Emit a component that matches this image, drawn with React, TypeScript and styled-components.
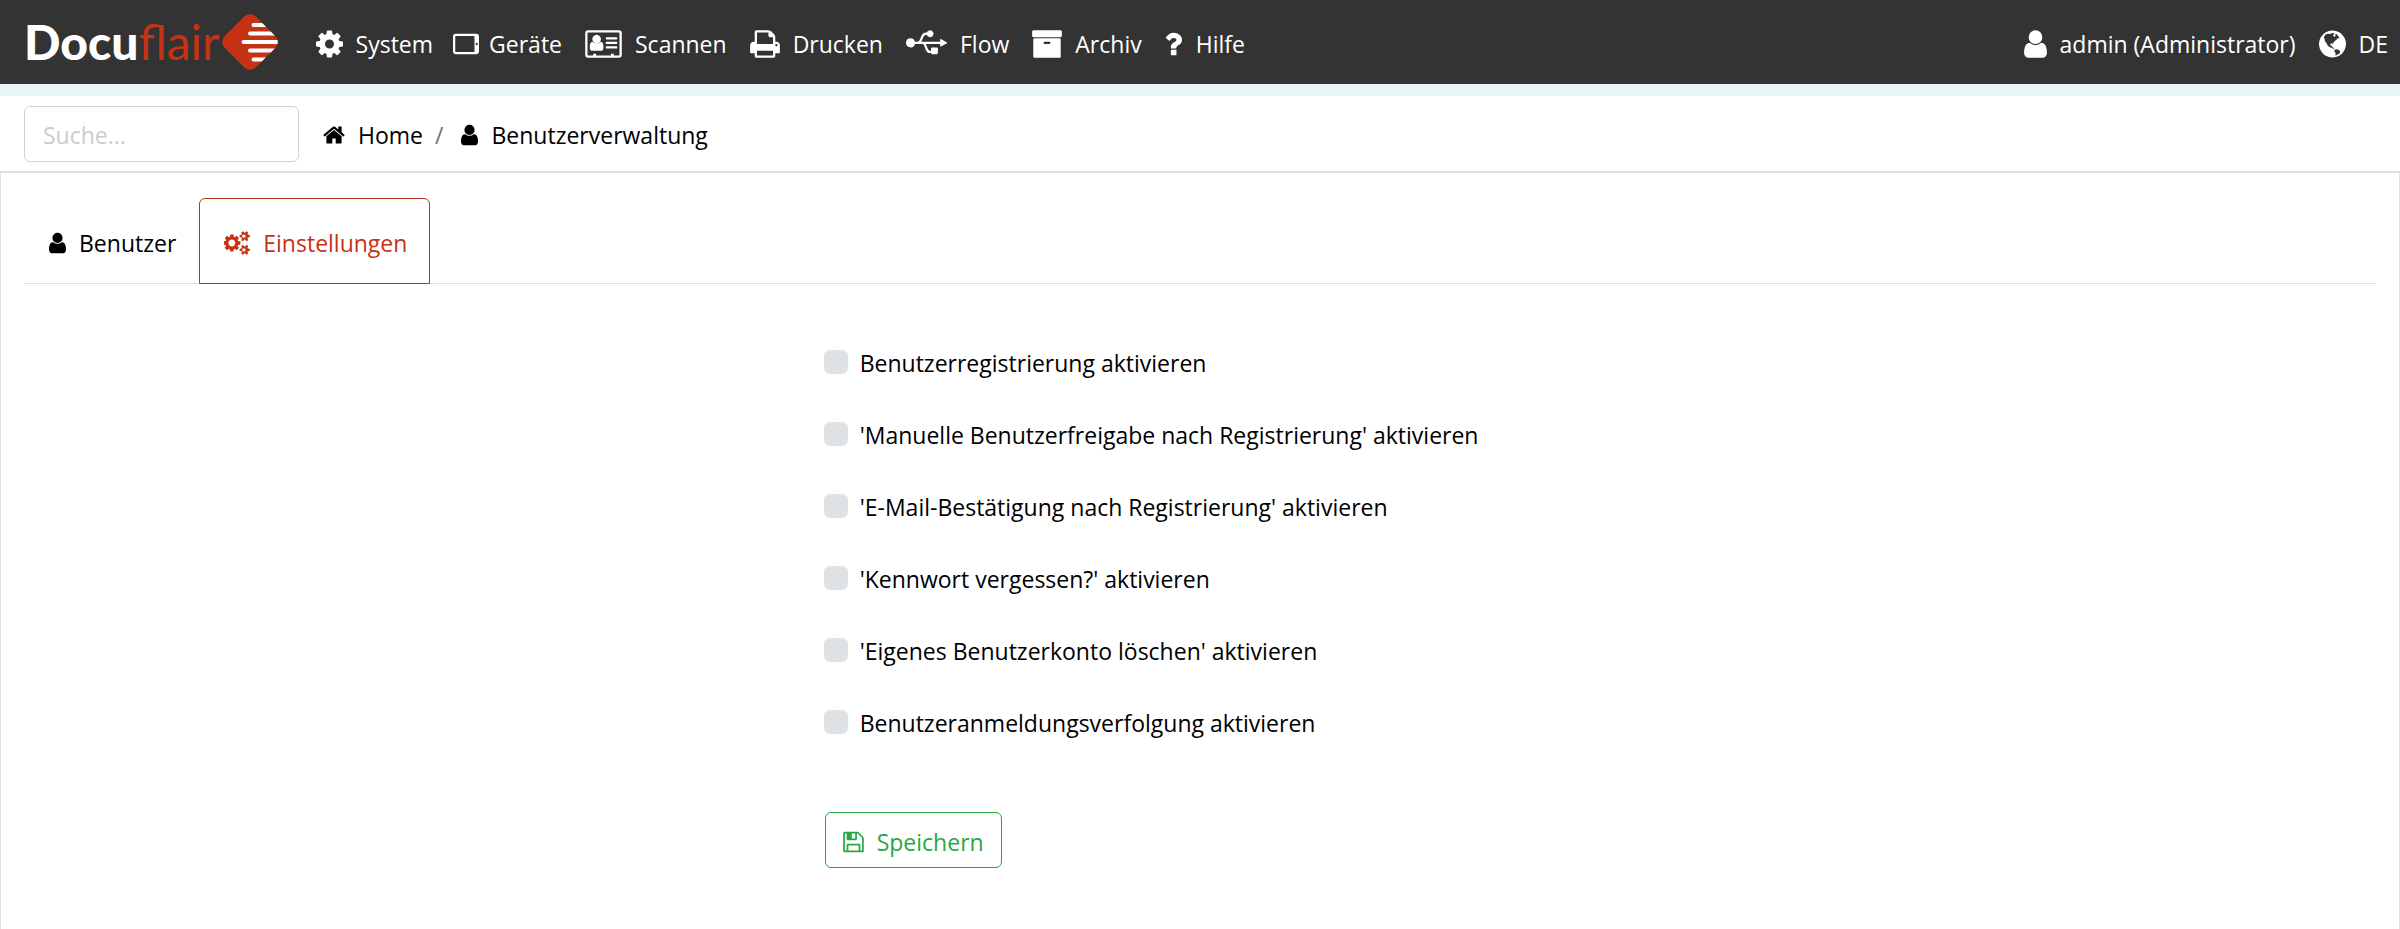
import React from 'react';
import styled, { createGlobalStyle } from 'styled-components';

const GlobalStyle = createGlobalStyle`
  *, *::before, *::after { box-sizing: border-box; }
  html, body, #root { height: 100%; }
  body {
    margin: 0;
    background: #fff;
    color: #000;
    font-family: 'Open Sans', 'Noto Sans', sans-serif;
    font-size: 23px;
    line-height: 36px;
  }
  a { color: inherit; text-decoration: none; }
  ul, ol { margin: 0; padding: 0; list-style: none; }
`;

const Page = styled.div`
  min-height: 100%;
  display: flex;
  flex-direction: column;
`;

const TopBar = styled.header`
  height: 84px;
  padding: 0 12px 0 24px;
  display: flex;
  align-items: center;
  background: #333;
  color: #fff;
`;

const AccentStrip = styled.div`
  height: 12px;
  background: #eaf4f7;
`;

const Brand = styled.a`
  display: flex;
  align-items: center;
  gap: 2px;
  margin-right: 38px;
  font-family: Lato, sans-serif;
  font-size: 48px;
  line-height: 56px;
`;

const BrandStrong = styled.span`
  font-weight: 900;
`;

const BrandLight = styled.span`
  font-weight: 400;
  color: #c53214;
`;

const NavList = styled.ul`
  display: flex;
  gap: 23px;
`;

const UserNav = styled(NavList)`
  margin-left: auto;
`;

const NavLink = styled.a`
  display: flex;
  align-items: center;
  gap: 13px;
  white-space: nowrap;
  padding-top: 4px;
`;

const SubBar = styled.div`
  display: flex;
  align-items: center;
  gap: 24px;
  padding: 10px 24px 9px;
`;

const SearchInput = styled.input`
  width: 275px;
  height: 56px;
  padding: 2px 18px 0;
  border: 1px solid #ced4da;
  border-radius: 6px;
  font: inherit;
  &::placeholder { color: #ccc; opacity: 1; }
`;

const Crumbs = styled.ol`
  display: flex;
  align-items: center;
  gap: 12px;
  padding-top: 2px;
`;

const Crumb = styled.li`
  display: flex;
  align-items: center;
  gap: 12px;
  & + &::before { content: '/'; color: #6c757d; margin-right: 6px; }
`;

const CrumbLink = styled.a`
  display: flex;
  align-items: center;
  gap: 13px;
`;

const Panel = styled.main`
  flex: 1;
  padding: 25px 23px;
  border: 1px solid #dee2e6;
  border-top: 2px solid #dfdfdf;
  border-bottom: 0;
`;

const Tabs = styled.div`
  display: flex;
  border-bottom: 1px solid #dee2e6;
`;

const Tab = styled.button<{ $active?: boolean }>`
  display: flex;
  align-items: center;
  gap: 13px;
  height: 86px;
  margin-bottom: -1px;
  padding: 4px 22px 0 24px;
  border: 1px solid ${(p) => (p.$active ? '#b83219' : 'transparent')};
  border-radius: 6px 6px 0 0;
  background: none;
  color: ${(p) => (p.$active ? '#c53214' : '#000')};
  font: inherit;
`;

const SettingsForm = styled.form`
  width: 32%;
  min-width: 660px;
  margin: 61px auto 0;
`;

const Option = styled.label`
  display: flex;
  align-items: center;
  gap: 12px;
  margin-bottom: 36px;
  white-space: nowrap;
`;

const Checkbox = styled.input`
  appearance: none;
  width: 24px;
  height: 24px;
  margin: 0 0 2px;
  border-radius: 6px;
  background: #dee2e4;
  &:checked { background: #c53214; }
`;

const SaveButton = styled.button`
  display: flex;
  align-items: center;
  gap: 13px;
  height: 56px;
  margin: 71px 0 0 1px;
  padding: 4px 17px 0;
  border: 1px solid #28a745;
  border-radius: 6px;
  background: none;
  color: #28a745;
  font: inherit;
`;

const Glyph = styled.svg<{ $overhang?: boolean }>`
  display: block;
  flex: none;
  fill: currentColor;
  margin: ${(p) => (p.$overhang ? '0 -3px' : '0')};
`;

type IconName =
  | 'cog' | 'cogs' | 'tablet' | 'idCard' | 'print' | 'usb' | 'archive'
  | 'question' | 'user' | 'globe' | 'home' | 'save';

const smallCog =
  'v140q0 16-149 31-12 27-30 52 51 113 51 138 0 4-4 7-122 71-124 71-8 0-46-47t-52-68q-20 2-30 2t-30-2q-14 21-52 68t-46 47q-2 0-124-71-4-3-4-7 0-25 51-138-18-25-30-52-149-15-149-31v-140q0-16 149-31 13-29 30-52-51-113-51-138 0-4 4-7 4-2 35-20t59-34 30-16q8 0 46 46.5t52 67.5q20-2 30-2t30 2q51-71 92-112l6-2q4 0 124 70 4 3 4 7 0 25-51 138 17 23 30 52 149 15 149 31z';

/* Each entry: first x, drawn width in font units, path. Height is 1792 units. */
const icons: Record<IconName, [number, number, string]> = {
  cog: [128, 1536, 'M1152 896q0-106-75-181t-181-75-181 75-75 181 75 181 181 75 181-75 75-181zm512-109v222q0 12-8 23t-20 13l-185 28q-19 54-39 91 35 50 107 138 10 12 10 25t-9 23q-27 37-99 108t-94 71q-12 0-26-9l-138-108q-44 23-91 38-16 136-29 186-7 28-36 28h-222q-14 0-24.5-8.5t-11.5-21.5l-28-184q-49-16-90-37l-141 107q-10 9-25 9-14 0-25-11-126-114-165-168-7-10-7-23 0-12 8-23 15-21 51-66.5t54-70.5q-27-50-41-99l-183-27q-13-2-21-12.5t-8-23.5v-222q0-12 8-23t19-13l186-28q14-46 39-92-40-57-107-138-10-12-10-24 0-10 9-23 26-36 98.5-107.5t94.5-71.5q13 0 26 10l138 107q44-23 91-38 16-136 29-186 7-28 36-28h222q14 0 24.5 8.5t11.5 21.5l28 184q49 16 90 37l142-107q9-9 24-9 13 0 25 10 129 119 165 170 7 8 7 22 0 12-8 23-15 21-51 66.5t-54 70.5q26 50 41 98l183 28q13 2 21 12.5t8 23.5z'],
  cogs: [0, 1920, `M832 896q0-106-75-181t-181-75-181 75-75 181 75 181 181 75 181-75 75-181zm768 512q0-52-38-90t-90-38-90 38-38 90q0 53 37.5 90.5t90.5 37.5 90.5-37.5 37.5-90.5zm0-1024q0-52-38-90t-90-38-90 38-38 90q0 53 37.5 90.5t90.5 37.5 90.5-37.5 37.5-90.5zm-384 421v185q0 10-7 19.5t-16 10.5l-155 24q-11 35-32 76 34 48 90 115 7 11 7 20 0 12-7 19-23 30-82.5 89.5t-78.5 59.5q-11 0-21-7l-115-90q-37 19-77 31-11 108-23 155-7 24-30 24h-186q-11 0-20-7.5t-10-17.5l-23-153q-34-10-75-31l-118 89q-7 7-20 7-11 0-21-8-144-133-144-160 0-9 7-19 10-14 41-53t47-61q-23-44-35-82l-152-24q-10-1-17-9.5t-7-19.5v-185q0-10 7-19.5t16-10.5l155-24q11-35 32-76-34-48-90-115-7-11-7-20 0-12 7-20 22-30 82-89t79-59q11 0 21 7l115 90q34-18 77-32 11-108 23-154 7-24 30-24h186q11 0 20 7.5t10 17.5l23 153q34 10 75 31l118-89q8-7 20-7 11 0 21 8 144 133 144 160 0 9-7 19-12 16-42 54t-45 60q23 48 34 82l152 23q10 2 17 10.5t7 19.5zM1920 1338${smallCog}M1920 314${smallCog}`],
  tablet: [0, 1472, 'M160 320H1312A160 160 0 0 1 1472 480V1312A160 160 0 0 1 1312 1472H160A160 160 0 0 1 0 1312V480A160 160 0 0 1 160 320ZM160 448A32 32 0 0 0 128 480V1312A32 32 0 0 0 160 1344H1184A32 32 0 0 0 1216 1312V480A32 32 0 0 0 1184 448ZM1344 832A64 64 0 1 0 1344 960A64 64 0 1 0 1344 832Z'],
  idCard: [0, 2048, 'M160 128H1888A160 160 0 0 1 2048 288V1504A160 160 0 0 1 1888 1664H160A160 160 0 0 1 0 1504V288A160 160 0 0 1 160 128ZM160 256A32 32 0 0 0 128 288V1504A32 32 0 0 0 160 1536H448V1440H608V1536H1440V1440H1600V1536H1888A32 32 0 0 0 1920 1504V288A32 32 0 0 0 1888 256ZM640 384A240 240 0 1 1 639 384ZM400 768Q640 980 880 768Q1024 780 1024 1090Q1024 1280 880 1280H400Q256 1280 256 1090Q256 780 400 768ZM1184 512H1760A32 32 0 0 1 1792 544V608A32 32 0 0 1 1760 640H1184A32 32 0 0 1 1152 608V544A32 32 0 0 1 1184 512ZM1184 768H1760A32 32 0 0 1 1792 800V864A32 32 0 0 1 1760 896H1184A32 32 0 0 1 1152 864V800A32 32 0 0 1 1184 768ZM1184 1024H1760A32 32 0 0 1 1792 1056V1120A32 32 0 0 1 1760 1152H1184A32 32 0 0 1 1152 1120V1056A32 32 0 0 1 1184 1024Z'],
  print: [64, 1664, 'M448 1536h896v-256h-896v256zm0-640h896v-384h-160q-40 0-68-28t-28-68v-160h-640v640zm1152 64q0-26-19-45t-45-19-45 19-19 45 19 45 45 19 45-19 19-45zm128 0v416q0 13-9.5 22.5t-22.5 9.5h-224v160q0 40-28 68t-68 28h-960q-40 0-68-28t-28-68v-160h-224q-13 0-22.5-9.5t-9.5-22.5v-416q0-79 56.5-135.5t135.5-56.5h64v-544q0-40 28-68t68-28h672q40 0 88 20t76 48l152 152q28 28 48 76t20 88v256h64q79 0 135.5 56.5t56.5 135.5z'],
  usb: [0, 2304, 'M256 576A256 256 0 0 1 505 768H660C760 740 780 640 850 480C910 340 990 256 1120 256H1172A192 192 0 1 1 1172 384H1120C1040 384 1000 450 960 540C915 640 890 720 850 768H1920V640Q1920 600 1960 622L2285 800Q2320 832 2285 864L1960 1042Q1920 1064 1920 1024V896H1106C1150 950 1180 1050 1210 1120C1240 1200 1290 1280 1344 1280H1408V1152Q1408 1088 1472 1088H1728Q1792 1088 1792 1152V1408Q1792 1472 1728 1472H1472Q1408 1472 1408 1408V1408H1344C1220 1408 1140 1300 1092 1170C1040 1040 1010 896 930 896H505A256 256 0 1 1 256 576Z'],
  archive: [64, 1664, 'M1088 832q0-26-19-45t-45-19h-256q-26 0-45 19t-19 45 19 45 45 19h256q26 0 45-19t19-45zm576-192v960q0 26-19 45t-45 19h-1408q-26 0-45-19t-19-45v-960q0-26 19-45t45-19h1408q26 0 45 19t19 45zm64-448v256q0 26-19 45t-45 19h-1536q-26 0-45-19t-19-45v-256q0-26 19-45t45-19h1536q26 0 45 19t19 45z'],
  question: [436, 1024, 'M1088 1256v240q0 16-12 28t-28 12h-240q-16 0-28-12t-12-28v-240q0-16 12-28t28-12h240q16 0 28 12t12 28zm316-600q0 54-15.5 101t-35 76.5-55 59.5-57.5 43.5-61 35.5q-41 23-68.5 65t-27.5 67q0 17-12 32.5t-28 15.5h-240q-15 0-25.5-18.5t-10.5-37.5v-45q0-83 65-156.5t143-108.5q59-27 84-56t25-76q0-42-46.5-74t-107.5-32q-65 0-108 29-35 25-107 115-13 16-31 16-12 0-25-8l-164-125q-13-10-15.5-25t5.5-28q160-266 464-266 80 0 161 31t146 83 106 127.5 41 158.5z'],
  user: [256, 1280, 'M1536 1399q0 109-62.5 187t-150.5 78h-854q-88 0-150.5-78t-62.5-187q0-85 8.5-160.5t31.5-152 58.5-131 94-89 134.5-34.5q131 128 313 128t313-128q76 0 134.5 34.5t94 89 58.5 131 31.5 152 8.5 160.5zm-256-887q0 159-112.5 271.5t-271.5 112.5-271.5-112.5-112.5-271.5 112.5-271.5 271.5-112.5 271.5 112.5 112.5 271.5z'],
  globe: [128, 1536, 'M896 128A768 768 0 1 1 895 128ZM600 310L470 390L400 520L440 600L470 740L560 860L610 960L740 1080L880 1130L1000 1210L960 1110L880 1060L860 1000L790 1000L760 900L850 860L930 900L960 790L1060 700L1150 650L1110 600L1230 590L1290 520L1200 420L1130 330L1040 340L1080 420L1010 500L930 430L960 360L1010 270L860 290L740 330ZM1010 1230L1110 1190L1230 1230L1330 1310L1300 1430L1180 1490L1060 1560L1080 1420L1010 1330Z'],
  home: [64, 1664, 'M1472 992v480q0 26-19 45t-45 19h-384v-384h-256v384h-384q-26 0-45-19t-19-45v-480q0-1 .5-3t.5-3l575-474 575 474q1 2 1 6zm223-69l-62 74q-8 9-21 11h-3q-13 0-21-7l-692-577-692 577q-12 8-24 7-13-2-21-11l-62-74q-8-10-7-23.5t11-21.5l719-599q32-26 76-26t76 26l244 204v-195q0-14 9-23t23-9h192q14 0 23 9t9 23v408l219 182q10 8 11 21.5t-7 23.5z'],
  save: [128, 1536, 'M512 1536h768v-384h-768v384zm896 0h128v-896q0-14-10-38.5t-20-34.5l-281-281q-10-10-34-20t-39-10v416q0 40-28 68t-68 28h-576q-40 0-68-28t-28-68v-416h-128v1280h128v-416q0-40 28-68t68-28h832q40 0 68 28t28 68v416zm-384-928v-320q0-13-9.5-22.5t-22.5-9.5h-192q-13 0-22.5 9.5t-9.5 22.5v320q0 13 9.5 22.5t22.5 9.5h192q13 0 22.5-9.5t9.5-22.5zm640 32v928q0 40-28 68t-68 28h-1344q-40 0-68-28t-28-68v-1344q0-40 28-68t68-28h928q40 0 88 20t76 48l280 280q28 28 48 76t20 88z'],
};

function Icon({ name, size = 24 }: { name: IconName; size?: number }) {
  const [x, w, d] = icons[name];
  return (
    <Glyph
      width={Math.round((w / 1792) * size)}
      height={size}
      viewBox={`${x} 0 ${w} 1792`}
      $overhang={name === 'tablet'}
      aria-hidden="true"
    >
      <path fillRule="evenodd" d={d} />
    </Glyph>
  );
}

function LogoMark() {
  return (
    <Glyph width="56" height="56" viewBox="0 0 56 56" aria-hidden="true">
      <clipPath id="diamond">
        <rect x="6" y="6" width="44" height="44" rx="8" transform="rotate(45 28 28)" />
      </clipPath>
      <g clipPath="url(#diamond)">
        <rect width="56" height="56" fill="#c53214" />
        <path
          d="M31.500 11H60M28 19.500H60M21.500 28H60M28 36.500H60M31.500 45.500H60"
          stroke="#fff"
          strokeWidth="4"
          strokeLinecap="round"
        />
      </g>
    </Glyph>
  );
}

const navItems: { icon: IconName; label: string }[] = [
  { icon: 'cog', label: 'System' },
  { icon: 'tablet', label: 'Geräte' },
  { icon: 'idCard', label: 'Scannen' },
  { icon: 'print', label: 'Drucken' },
  { icon: 'usb', label: 'Flow' },
  { icon: 'archive', label: 'Archiv' },
  { icon: 'question', label: 'Hilfe' },
];

const userItems: { icon: IconName; label: string }[] = [
  { icon: 'user', label: 'admin (Administrator)' },
  { icon: 'globe', label: 'DE' },
];

const options = [
  'Benutzerregistrierung aktivieren',
  "'Manuelle Benutzerfreigabe nach Registrierung' aktivieren",
  "'E-Mail-Bestätigung nach Registrierung' aktivieren",
  "'Kennwort vergessen?' aktivieren",
  "'Eigenes Benutzerkonto löschen' aktivieren",
  'Benutzeranmeldungsverfolgung aktivieren',
];

export default function App() {
  return (
    <Page>
      <GlobalStyle />
      <TopBar>
        <Brand href="#">
          <span><BrandStrong>Docu</BrandStrong><BrandLight>flair</BrandLight></span>
          <LogoMark />
        </Brand>
        <nav>
          <NavList>
            {navItems.map((item) => (
              <li key={item.label}>
                <NavLink href="#"><Icon name={item.icon} size={32} />{item.label}</NavLink>
              </li>
            ))}
          </NavList>
        </nav>
        <UserNav>
          {userItems.map((item) => (
            <li key={item.label}>
              <NavLink href="#"><Icon name={item.icon} size={32} />{item.label}</NavLink>
            </li>
          ))}
        </UserNav>
      </TopBar>
      <AccentStrip />
      <SubBar>
        <SearchInput type="search" placeholder="Suche..." aria-label="Suche" />
        <nav aria-label="Breadcrumb">
          <Crumbs>
            <Crumb><CrumbLink href="#"><Icon name="home" />Home</CrumbLink></Crumb>
            <Crumb><CrumbLink href="#"><Icon name="user" />Benutzerverwaltung</CrumbLink></Crumb>
          </Crumbs>
        </nav>
      </SubBar>
      <Panel>
        <Tabs role="tablist">
          <Tab type="button" role="tab" aria-selected={false}><Icon name="user" />Benutzer</Tab>
          <Tab type="button" role="tab" aria-selected $active><Icon name="cogs" />Einstellungen</Tab>
        </Tabs>
        <SettingsForm onSubmit={(e) => e.preventDefault()}>
          {options.map((text) => (
            <Option key={text}><Checkbox type="checkbox" />{text}</Option>
          ))}
          <SaveButton type="submit"><Icon name="save" />Speichern</SaveButton>
        </SettingsForm>
      </Panel>
    </Page>
  );
}
